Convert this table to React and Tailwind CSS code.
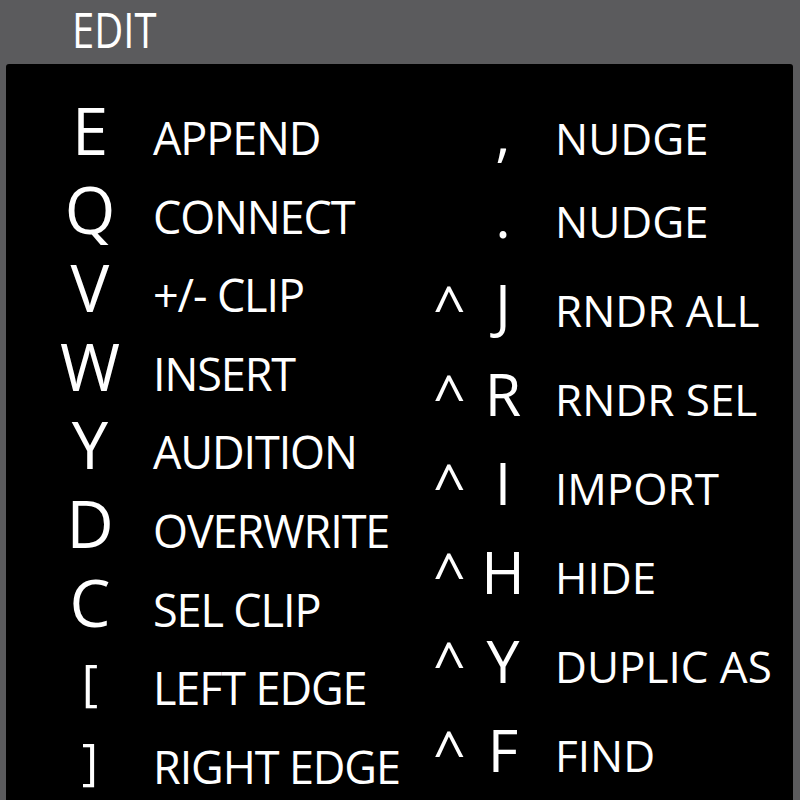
const leftRows = [
  ['E', 'APPEND'],
  ['Q', 'CONNECT'],
  ['V', '+/- CLIP'],
  ['W', 'INSERT'],
  ['Y', 'AUDITION'],
  ['D', 'OVERWRITE'],
  ['C', 'SEL CLIP'],
  ['[', 'LEFT EDGE'],
  [']', 'RIGHT EDGE'],
];

const rightRows = [
  ['', ',', 'NUDGE'],
  ['', '.', 'NUDGE'],
  ['^', 'J', 'RNDR ALL'],
  ['^', 'R', 'RNDR SEL'],
  ['^', 'I', 'IMPORT'],
  ['^', 'H', 'HIDE'],
  ['^', 'Y', 'DUPLIC AS'],
  ['^', 'F', 'FIND'],
];

// brackets in the reference are cap-height and sit on the baseline
const Key = ({ k }) =>
  k === '[' || k === ']' ? (
    <span className="relative -top-[5px] text-[50px]">{k}</span>
  ) : (
    k
  );

const App = () => {
  return (
    <div className="w-[800px] h-[800px] overflow-hidden bg-[#5b5b5d] flex flex-col font-['Open_Sans','Noto_Sans',sans-serif] text-white">
      <div className="h-[64px] shrink-0 pl-[72px] flex items-start">
        <span className="block text-[50px] leading-none mt-[4px] origin-left scale-x-[0.8] whitespace-nowrap">
          EDIT
        </span>
      </div>
      <div className="flex-1 ml-[6px] mr-[7px] bg-black rounded-t-[3px] flex pl-[52px]">
        <div className="w-[375px] shrink-0 pt-[34px] flex flex-col">
          {leftRows.map(([key, label], i) => (
            <div key={i} className="h-[78.6px] shrink-0 flex items-baseline">
              <span className="w-[64px] text-center text-[65px] leading-none">
                <Key k={key} />
              </span>
              <span className="ml-[31px] text-[45px] leading-none whitespace-nowrap tracking-[-0.025em]">
                {label}
              </span>
            </div>
          ))}
        </div>
        <div className="flex-1 pt-[39px] flex flex-col">
          {rightRows.map(([mod, key, label], i) => (
            <div
              key={i}
              className={
                i === 0
                  ? 'h-[83px] shrink-0 flex items-baseline'
                  : 'h-[89px] shrink-0 flex items-baseline'
              }
            >
              <span className="w-[42px] text-[57px] leading-none">{mod}</span>
              <span className="w-[56px] text-center text-[59px] leading-none">{key}</span>
              <span className="ml-[24px] text-[44px] leading-none whitespace-nowrap">
                {label}
              </span>
            </div>
          ))}
        </div>
      </div>
    </div>
  );
};

export default App;
